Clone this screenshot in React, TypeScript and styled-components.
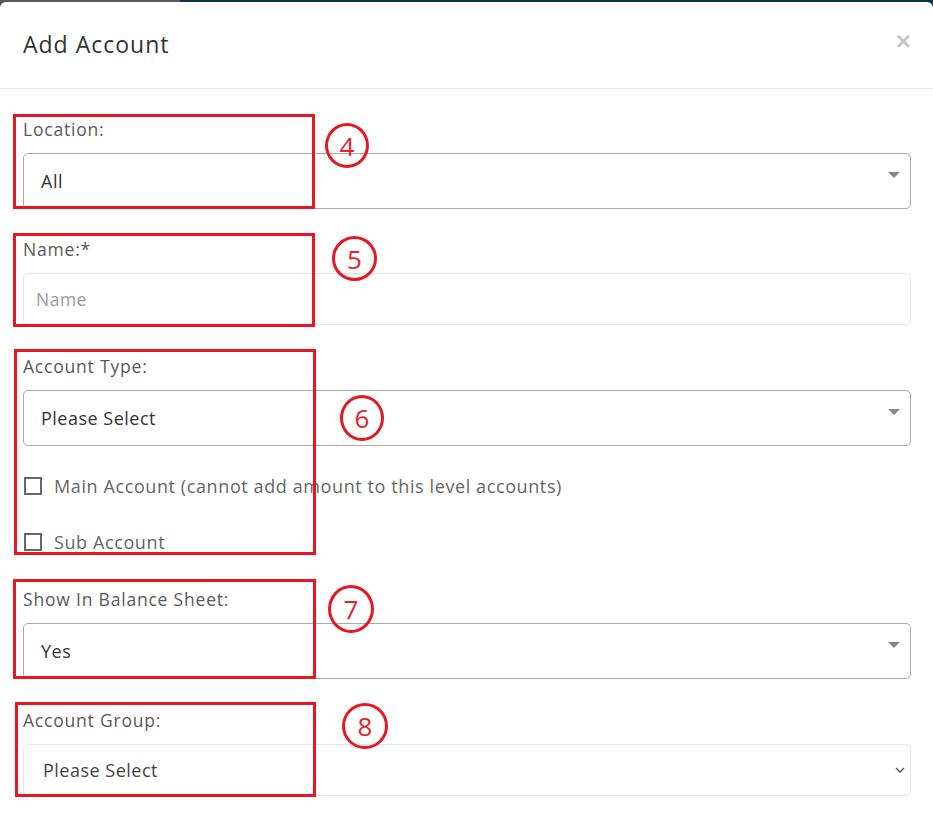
import React from "react";
import styled, { createGlobalStyle } from "styled-components";

const GlobalStyle = createGlobalStyle`
  html, body { margin: 0; padding: 0; }
  body {
    font-family: "Open Sans", "Liberation Sans", sans-serif;
    background: linear-gradient(to right, #5a5a5a 0, #5a5a5a 180px, #0c3744 180px, #0c3744 100%);
  }
  * { box-sizing: border-box; }
`;

const Modal = styled.div`
  margin-top: 2px;
  min-height: 816px;
  background: #fff;
  border-radius: 6px 6px 0 0;
`;

const Header = styled.div`
  height: 87px;
  display: flex;
  align-items: center;
  justify-content: space-between;
  padding: 0 22px 0 23px;
  border-bottom: 1px solid #e5e5e5;
`;

const Title = styled.h4`
  margin: 0;
  font-size: 23px;
  font-weight: 400;
  letter-spacing: 1px;
  color: #333;
  line-height: 1;
  padding-bottom: 2px;
`;

const Close = styled.span`
  font-family: "Liberation Sans", sans-serif;
  font-size: 26px;
  font-weight: 700;
  color: #000;
  opacity: 0.22;
  line-height: 1;
  margin-top: -8px;
`;

const Body = styled.div`
  padding: 28px 22px 0 23px;
`;

const Group = styled.div<{ $mb: number }>`
  position: relative;
  margin-bottom: ${(p) => p.$mb}px;
`;

const Label = styled.div`
  font-size: 17.5px;
  letter-spacing: 0.8px;
  line-height: 24px;
  color: #595959;
  margin-bottom: 12px;
`;

const Select2 = styled.div`
  height: 56px;
  border: 1px solid #aaa;
  border-radius: 5px;
  display: flex;
  align-items: center;
  justify-content: space-between;
  padding: 0 10px 0 17px;
  font-size: 18px;
  letter-spacing: 0.5px;
  color: #333;
`;

const Caret = styled.span`
  width: 0;
  height: 0;
  border-style: solid;
  border-width: 6px 6px 0 6px;
  border-color: #888 transparent transparent transparent;
  margin-top: -12px;
`;

const Input = styled.div`
  height: 52px;
  border: 1px solid #e6e6e6;
  border-radius: 5px;
  display: flex;
  align-items: center;
  padding: 0 12px;
  font-size: 17.5px;
  letter-spacing: 0.5px;
  color: #9a9a9a;
`;

const NativeSelect = styled.div`
  height: 52px;
  border: 1px solid #e6e6e6;
  border-radius: 5px;
  display: flex;
  align-items: center;
  justify-content: space-between;
  padding: 0 5px 0 19px;
  font-size: 18px;
  letter-spacing: 0.5px;
  color: #444;
`;

const CheckRow = styled.label<{ $mt: number }>`
  display: flex;
  align-items: center;
  gap: 12px;
  height: 24px;
  margin-top: ${(p) => p.$mt}px;
  padding-left: 1px;
  font-size: 18px;
  letter-spacing: 0.6px;
  color: #666;
`;

const Box = styled.span`
  width: 18px;
  height: 18px;
  border: 2px solid #666;
  background: #fff;
  flex-shrink: 0;
`;

const Mark = styled.div<{ $l: number; $t: number; $w: number; $h: number }>`
  position: absolute;
  left: ${(p) => p.$l}px;
  top: ${(p) => p.$t}px;
  width: ${(p) => p.$w}px;
  height: ${(p) => p.$h}px;
  border: 3px solid #e8161f;
  pointer-events: none;
`;

const Badge = styled.div<{ $l: number; $t: number; $w: number; $h: number }>`
  position: absolute;
  left: ${(p) => p.$l}px;
  top: ${(p) => p.$t}px;
  width: ${(p) => p.$w}px;
  height: ${(p) => p.$h}px;
  border: 3px solid #e8161f;
  border-radius: 50%;
  display: flex;
  align-items: center;
  justify-content: center;
  font-size: 26px;
  color: #e8202a;
  line-height: 1;
  background: transparent;
`;

const Chevron = () => (
  <svg width="10" height="6" viewBox="0 0 10 6" fill="none">
    <path d="M1 1l4 4 4-4" stroke="#555" strokeWidth="1.3" />
  </svg>
);

export default function App() {
  return (
    <>
      <GlobalStyle />
      <Modal>
        <Header>
          <Title>Add Account</Title>
          <Close>×</Close>
        </Header>
        <Body>
          <Group $mb={28}>
            <Label>Location:</Label>
            <Select2>
              <span>All</span>
              <Caret />
            </Select2>
            <Mark $l={-10} $t={-3} $w={302} $h={95} />
            <Badge $l={302} $t={6} $w={44} $h={45}>4</Badge>
          </Group>
          <Group $mb={29}>
            <Label>Name:*</Label>
            <Input>Name</Input>
            <Mark $l={-10} $t={-4} $w={302} $h={94} />
            <Badge $l={309} $t={-1} $w={45} $h={45}>5</Badge>
          </Group>
          <Group $mb={33}>
            <Label>Account Type:</Label>
            <Select2>
              <span>Please Select</span>
              <Caret />
            </Select2>
            <CheckRow $mt={28}>
              <Box />
              Main Account (cannot add amount to this level accounts)
            </CheckRow>
            <CheckRow $mt={32}>
              <Box />
              Sub Account
            </CheckRow>
            <Mark $l={-9} $t={-5} $w={302} $h={206} />
            <Badge $l={317} $t={41} $w={44} $h={46}>6</Badge>
          </Group>
          <Group $mb={29}>
            <Label>Show In Balance Sheet:</Label>
            <Select2>
              <span>Yes</span>
              <Caret />
            </Select2>
            <Mark $l={-10} $t={-8} $w={303} $h={100} />
            <Badge $l={305} $t={-2} $w={46} $h={48}>7</Badge>
          </Group>
          <Group $mb={0}>
            <Label>Account Group:</Label>
            <NativeSelect>
              <span>Please Select</span>
              <Chevron />
            </NativeSelect>
            <Mark $l={-8} $t={-6} $w={301} $h={95} />
            <Badge $l={319} $t={-5} $w={46} $h={46}>8</Badge>
          </Group>
        </Body>
      </Modal>
    </>
  );
}
